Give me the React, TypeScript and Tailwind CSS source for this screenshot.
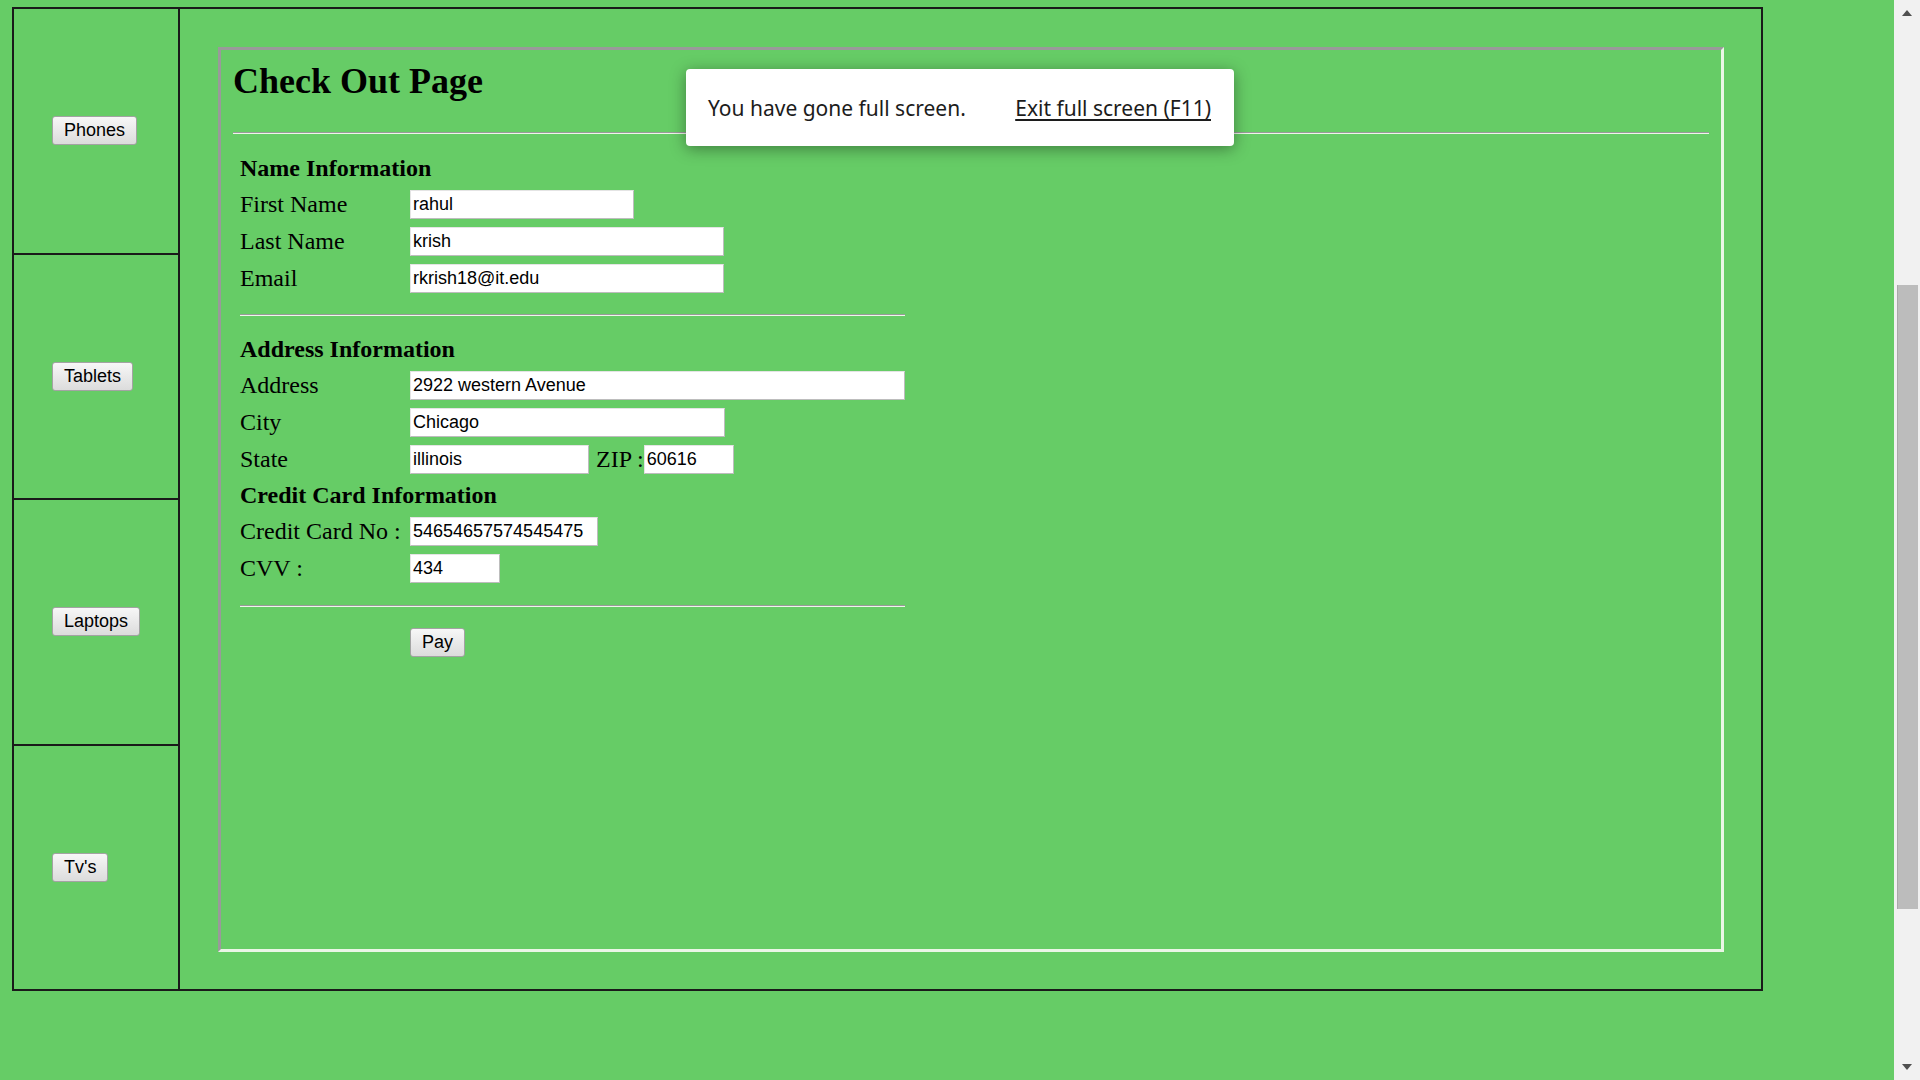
const SIDE_LINKS = ['Phones', 'Tablets', 'Laptops', "Tv's"];

const serif = "font-['Liberation_Serif','Times_New_Roman',serif]";
const sans = "font-['Liberation_Sans',Arial,sans-serif]";

function Rule() {
  return <div className="h-[2px] border-t border-t-[#9a9a9a] border-b border-b-[#eef6ea]" />;
}

function Field({ value, width }: { value: string; width: string }) {
  return (
    <input
      readOnly
      value={value}
      className={`${width} h-[29px] bg-white text-black text-[18px] ${sans} pl-[2px] border border-t-[#e4e4e4] border-l-[#e4e4e4] border-r-[#bdbdbd] border-b-[#bdbdbd] outline-none`}
    />
  );
}

function Heading({ children }: { children: string }) {
  return (
    <div className="h-[35px] flex items-center">
      <span className={`${serif} text-[24px] leading-[29px] font-bold text-black`}>{children}</span>
    </div>
  );
}

function Row({ label, children }: { label: string; children: React.ReactNode }) {
  return (
    <div className="h-[37px] flex items-center">
      <span className={`${serif} w-[170px] shrink-0 text-[24px] leading-[29px] text-black`}>{label}</span>
      {children}
    </div>
  );
}

function SideButton({ label }: { label: string }) {
  return (
    <button
      className={`h-[29px] px-[11px] ${sans} text-[18px] leading-[21px] text-black rounded-[3px] border border-[#a3a3a3] bg-gradient-to-b from-[#f7f7f7] to-[#dcdcdc]`}
    >
      {label}
    </button>
  );
}

export default function App() {
  return (
    <div className="w-[1920px] h-[1080px] overflow-hidden flex bg-[#66cc66]">
      {/* page */}
      <div className="relative flex-1 pt-[7px] pl-[12px]">
        <div className="w-[1751px] h-[984px] flex border-2 border-[#1a1a1a]">
          {/* sidebar */}
          <div className="w-[166px] shrink-0 flex flex-col border-r-2 border-[#1a1a1a]">
            {SIDE_LINKS.map((l, i) => (
              <div
                key={l}
                className={`flex-1 flex items-center pl-[38px] ${i < SIDE_LINKS.length - 1 ? 'border-b-2 border-[#1a1a1a]' : ''}`}
              >
                <SideButton label={l} />
              </div>
            ))}
          </div>

          {/* main cell */}
          <div className="flex-1 flex pl-[38px] pr-[37px] pt-[38px] pb-[37px]">
            <div className="flex-1 border-[3px] border-t-[#9a9a9a] border-l-[#9a9a9a] border-r-[#eaf6e6] border-b-[#eaf6e6] px-[12px]">
              <h2 className={`${serif} mt-[13px] text-[36px] leading-[36px] font-bold text-black`}>Check Out Page</h2>
              <div className="mt-[33px]">
                <Rule />
              </div>

              <div className="ml-[7px] mt-[17px] w-[665px]">
                <Heading>Name Information</Heading>
                <Row label="First Name">
                  <Field value="rahul" width="w-[224px]" />
                </Row>
                <Row label="Last Name">
                  <Field value="krish" width="w-[314px]" />
                </Row>
                <Row label="Email">
                  <Field value="rkrish18@it.edu" width="w-[314px]" />
                </Row>
                <div className="h-[35px] flex flex-col justify-center">
                  <Rule />
                </div>

                <Heading>Address Information</Heading>
                <Row label="Address">
                  <Field value="2922 western Avenue" width="w-[495px]" />
                </Row>
                <Row label="City">
                  <Field value="Chicago" width="w-[315px]" />
                </Row>
                <Row label="State">
                  <Field value="illinois" width="w-[179px]" />
                  <span className={`${serif} ml-[7px] text-[24px] leading-[29px] text-black`}>ZIP :</span>
                  <Field value="60616" width="w-[90px]" />
                </Row>

                <Heading>Credit Card Information</Heading>
                <Row label="Credit Card No :">
                  <Field value="54654657574545475" width="w-[188px]" />
                </Row>
                <Row label="CVV :">
                  <Field value="434" width="w-[90px]" />
                </Row>
                <div className="h-[37px] flex flex-col justify-center">
                  <Rule />
                </div>

                <div className="h-[37px] flex items-center pl-[170px]">
                  <SideButton label="Pay" />
                </div>
              </div>
            </div>
          </div>
        </div>

        {/* browser full screen notice */}
        <div className="absolute left-[686px] top-[69px] w-[548px] h-[77px] bg-white rounded-[4px] shadow-[0_3px_16px_rgba(0,0,0,0.38)] flex items-center justify-between pl-[22px] pr-[23px] pt-[3px] font-['Noto_Sans','Open_Sans',sans-serif] text-[21px] text-[#1c1c1c]">
          <span>You have gone full screen.</span>
          <span className="underline underline-offset-[3px]">Exit full screen (F11)</span>
        </div>
      </div>

      {/* scrollbar */}
      <div className="w-[26px] shrink-0 bg-[#f1f1f1] flex flex-col items-center">
        <svg width="12" height="26" viewBox="0 0 12 26" className="shrink-0">
          <polygon points="1,16 11,16 6,10" fill="#505050" />
        </svg>
        <div className="flex-1 w-full pt-[259px] pl-[3px] pr-[2px]">
          <div className="h-[624px] bg-[#bcbcbc] border-l border-[#a9a9a9]" />
        </div>
        <svg width="12" height="26" viewBox="0 0 12 26" className="shrink-0">
          <polygon points="1,10 11,10 6,16" fill="#505050" />
        </svg>
      </div>
    </div>
  );
}
